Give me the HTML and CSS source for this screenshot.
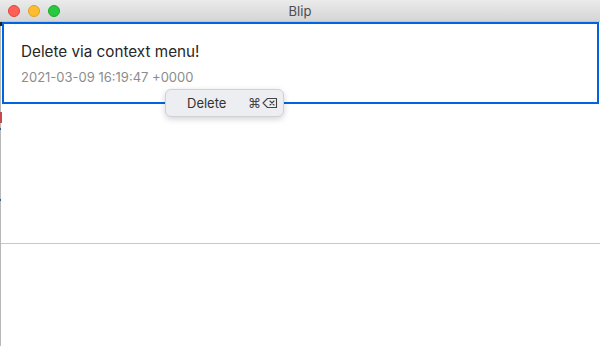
FILE: index.html
```html
<!DOCTYPE html>
<html>
<head>
<meta charset="utf-8">
<link rel="stylesheet" href="styles.css">
</head>
<body>
<div class="window">
  <div class="titlebar">
    <div class="lights">
      <span class="light red"></span>
      <span class="light yellow"></span>
      <span class="light green"></span>
    </div>
    <div class="title">Blip</div>
  </div>
  <div class="content">
    <div class="edge">
      <span class="edge-dark"></span>
      <span class="edge-red"></span>
      <span class="edge-blue one"></span>
      <span class="edge-blue two"></span>
    </div>
    <div class="main">
      <div class="list">
        <div class="cell selected">
          <div class="message">Delete via context menu!</div>
          <div class="date">2021-03-09 16:19:47 +0000</div>
        </div>
        <div class="menu">
          <span class="menu-label">Delete</span>
          <span class="shortcut">⌘<svg class="del" viewBox="0 0 16 12" width="16" height="12"><path d="M5.5 1.5 H14.5 V10.5 H5.5 L1 6 Z" fill="none" stroke="#444" stroke-width="1.1" stroke-linejoin="round"/><path d="M8 4 L12 8 M12 4 L8 8" stroke="#444" stroke-width="1.1" stroke-linecap="round"/></svg></span>
        </div>
      </div>
      <div class="divider"></div>
      <div class="bottom"></div>
    </div>
  </div>
</div>
</body>
</html>
```
FILE: styles.css
```css
html, body {
  margin: 0;
  padding: 0;
  background: #ffffff;
}
body {
  font-family: Inter, "Liberation Sans", Arial, sans-serif;
}
.window {
  width: 600px;
  height: 346px;
  display: flex;
  flex-direction: column;
  overflow: hidden;
}
.titlebar {
  height: 22px;
  flex: 0 0 22px;
  background: linear-gradient(#ebebeb, #d5d5d5);
  border-bottom: 1px solid #c4c4c4;
  box-sizing: border-box;
  position: relative;
  display: flex;
  align-items: center;
  justify-content: center;
}
.lights {
  position: absolute;
  left: 8px;
  top: 5px;
  display: flex;
  gap: 8px;
}
.light {
  width: 12px;
  height: 12px;
  border-radius: 50%;
  box-sizing: border-box;
}
.red { background: #fe5f57; border: 0.5px solid #e0443e; }
.yellow { background: #febc2e; border: 0.5px solid #dea123; }
.green { background: #28c840; border: 0.5px solid #1aab29; }
.title {
  font-size: 13px;
  color: #4d4d4d;
  padding-top: 1px;
}
.content {
  flex: 1;
  display: flex;
}
.edge {
  width: 1px;
  background: #b8b8b8;
  position: relative;
  flex: 0 0 1px;
}
.edge span {
  position: absolute;
  left: 0;
  width: 1px;
}
.edge-dark { top: 0; height: 4px; background: #222; width: 2px !important; }
.edge-red { top: 90px; height: 11px; background: #c24a4a; width: 2px !important; }
.edge-blue.one { top: 106px; height: 2px; background: #2f5d9a; }
.edge-blue.two { top: 177px; height: 2px; background: #2f5d9a; }
.main {
  flex: 1;
  display: flex;
  flex-direction: column;
}
.list {
  height: 221px;
  position: relative;
  padding-left: 1px;
  padding-right: 1px;
}
.cell {
  height: 82px;
  box-sizing: border-box;
  border: 2px solid #0064e1;
  padding: 19px 0 0 17px;
}
.message {
  font-size: 15.25px;
  color: #262626;
  line-height: 18px;
}
.date {
  margin-top: 9px;
  font-size: 13px;
  color: #8c8c8c;
  line-height: 15px;
}
.menu {
  position: absolute;
  left: 164px;
  top: 67px;
  width: 119px;
  height: 28px;
  box-sizing: border-box;
  background: #eceef1;
  border: 1px solid #cfd1d5;
  border-radius: 6px;
  box-shadow: 0 2px 6px rgba(0,0,0,0.18);
  display: flex;
  align-items: center;
  padding: 0 5px 0 21px;
  font-size: 13px;
  color: #333;
}
.menu-label {
  flex: 1;
}
.shortcut {
  display: flex;
  align-items: center;
  gap: 1px;
  color: #444;
  font-size: 13px;
}
.del {
  display: block;
}
.divider {
  height: 1px;
  background: #c8c8c8;
}
.bottom {
  flex: 1;
}
```
